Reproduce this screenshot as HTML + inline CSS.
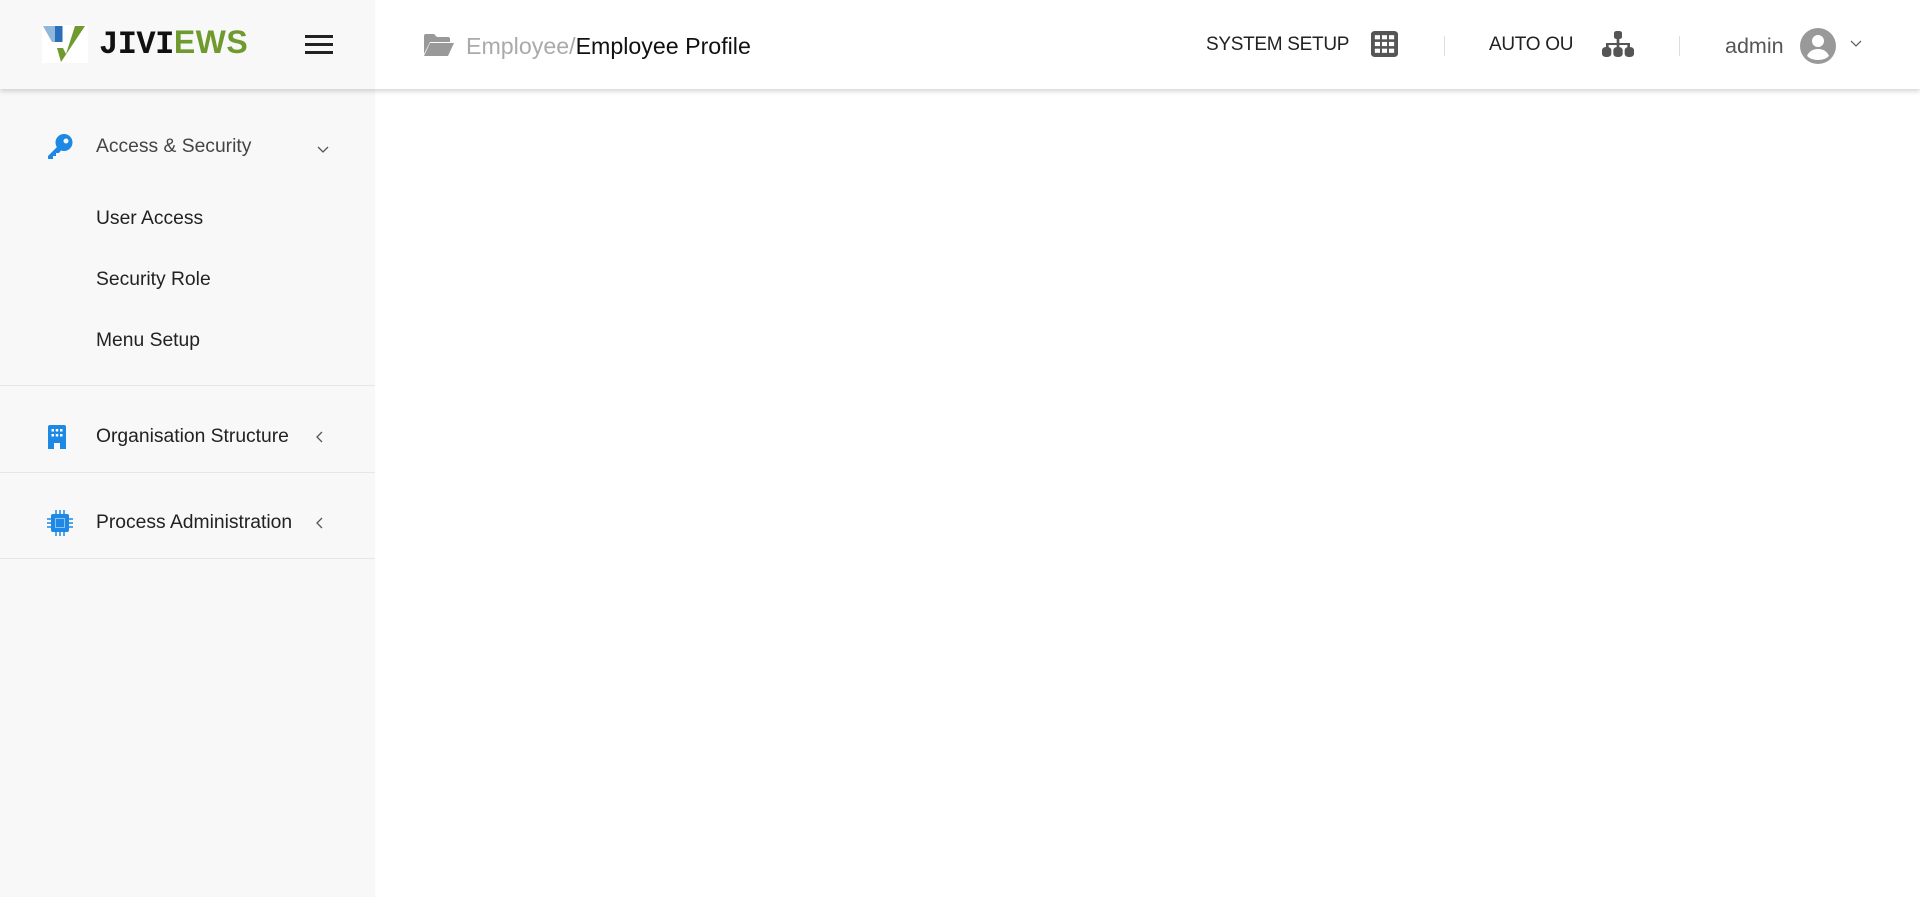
<!DOCTYPE html>
<html><head><meta charset="utf-8"><style>
*{margin:0;padding:0;box-sizing:border-box}
body{width:1920px;height:897px;background:#fff;font-family:"Liberation Sans",sans-serif;position:relative;overflow:hidden}
.side{position:absolute;left:0;top:0;width:375px;height:897px;background:#f8f8f8}
.top{position:absolute;left:0;top:0;width:1920px;height:89px;background:#fff;box-shadow:0 2px 5px rgba(0,0,0,.18)}
.logoarea{position:absolute;left:0;top:0;width:375px;height:89px;background:#f8f8f8}
.t{position:absolute;white-space:nowrap}
.item{position:absolute;left:96px;font-size:19.3px;color:#222;transform:translateY(-50%)}
.sep{position:absolute;left:0;width:375px;height:1px;background:#e6e6e6}
</style></head><body>
<div class="side"></div>
<div class="top"></div>
<div class="logoarea"></div>
<svg style="position:absolute;left:42px;top:25px" width="46" height="38" viewBox="0 0 46 38">
<rect width="46" height="38" fill="#fff"/>
<path d="M1 1h20v16L10 17z" fill="#8fb7dc"/><path d="M13 1h7v16h-7z" fill="#2a6fb8"/>
<path d="M43 1L19 37l-4-14h6l3 6L33 1z" fill="#6e9a2e"/>
</svg>
<div class="t" style="left:99px;top:24px;font:bold 32px 'Liberation Mono',monospace;color:#111;letter-spacing:-0.5px">JIVI<span style="color:#6e9a2e;font-family:'Liberation Sans';letter-spacing:0.5px">EWS</span></div>
<div style="position:absolute;left:305px;top:35px;width:28px;height:3px;background:#222;box-shadow:0 8px 0 #222,0 16px 0 #222"></div>
<svg style="position:absolute;left:423px;top:33px" width="32" height="24" viewBox="0 0 32 24"><path d="M1 3q0-2 2-2h8l3 3h11q2 0 2 2v3H7L1 21z" fill="#999"/><path d="M7 10h24l-6 13H1z" fill="#999"/></svg>
<div class="t" style="left:466px;top:33px;font-size:23.2px;color:#aaa">Employee/<span style="color:#111">Employee Profile</span></div>
<div class="t" style="left:1206px;top:34px;font-size:19px;color:#222;letter-spacing:-0.3px">SYSTEM SETUP</div>
<svg style="position:absolute;left:1371px;top:31px" width="27" height="26" viewBox="0 0 21 25" preserveAspectRatio="none"><rect width="21" height="25" rx="3" fill="#555"/><g fill="#fff"><rect x="3" y="4" width="4" height="4"/><rect x="8.5" y="4" width="4" height="4"/><rect x="14" y="4" width="4" height="4"/><rect x="3" y="10.5" width="4" height="4"/><rect x="8.5" y="10.5" width="4" height="4"/><rect x="14" y="10.5" width="4" height="4"/><rect x="3" y="17" width="4" height="4"/><rect x="8.5" y="17" width="4" height="4"/><rect x="14" y="17" width="4" height="4"/></g></svg>
<div style="position:absolute;left:1444px;top:36px;width:1px;height:20px;background:#ddd"></div>
<div class="t" style="left:1489px;top:34px;font-size:19px;color:#222;letter-spacing:-0.3px">AUTO OU</div>
<svg style="position:absolute;left:1602px;top:31px" width="32" height="26" viewBox="0 0 24 26" preserveAspectRatio="none"><g fill="#555"><rect x="9" y="0" width="6" height="8" rx="2"/><rect x="11" y="7" width="2" height="6"/><rect x="3" y="12" width="18" height="2"/><rect x="3" y="12" width="2" height="5"/><rect x="19" y="12" width="2" height="5"/><rect x="11" y="12" width="2" height="5"/><rect x="0" y="16" width="7" height="10" rx="3"/><rect x="8.5" y="16" width="7" height="10" rx="3"/><rect x="17" y="16" width="7" height="10" rx="3"/></g></svg>
<div style="position:absolute;left:1679px;top:36px;width:1px;height:20px;background:#ddd"></div>
<div class="t" style="left:1725px;top:34px;font-size:21.5px;color:#555">admin</div>
<svg style="position:absolute;left:1800px;top:28px" width="36" height="36" viewBox="0 0 36 36"><circle cx="18" cy="18" r="18" fill="#999"/><circle cx="18" cy="13" r="6" fill="#fff"/><path d="M7 28q3-7 11-7t11 7q-4 4-11 4t-11-4z" fill="#fff"/></svg>
<svg style="position:absolute;left:1850px;top:40px" width="12" height="8" viewBox="0 0 12 8"><path d="M1 1l5 5 5-5" stroke="#666" stroke-width="1.3" fill="none"/></svg>

<svg style="position:absolute;left:47px;top:134px" width="26" height="26" viewBox="0 0 26 26"><circle cx="17" cy="8.5" r="8.5" fill="#1e88e5"/><circle cx="19" cy="7" r="2.5" fill="#f8f8f8"/><path d="M11 12l-10 10v3h5v-3h3v-3h3l3-4z" fill="#1e88e5"/></svg>
<div class="item" style="top:147px;color:#444">Access &amp; Security</div>
<svg style="position:absolute;left:317px;top:146px" width="12" height="8" viewBox="0 0 12 8"><path d="M1 1l5 5 5-5" stroke="#555" stroke-width="1.3" fill="none"/></svg>
<div class="item" style="top:219px">User Access</div>
<div class="item" style="top:280px">Security Role</div>
<div class="item" style="top:341px">Menu Setup</div>
<div class="sep" style="top:385px"></div>
<svg style="position:absolute;left:48px;top:425px" width="18" height="24" viewBox="0 0 18 24"><path d="M2 0h14q2 0 2 2v22h-6v-6H6v6H0V2q0-2 2-2z" fill="#1e88e5"/><g fill="#fff"><rect x="3.5" y="4" width="2.5" height="2.5"/><rect x="7.75" y="4" width="2.5" height="2.5"/><rect x="12" y="4" width="2.5" height="2.5"/><rect x="3.5" y="9" width="2.5" height="2.5"/><rect x="7.75" y="9" width="2.5" height="2.5"/><rect x="12" y="9" width="2.5" height="2.5"/></g></svg>
<div class="item" style="top:437px">Organisation Structure</div>
<svg style="position:absolute;left:316px;top:431px" width="8" height="12" viewBox="0 0 8 12"><path d="M6 1L1 6l5 5" stroke="#555" stroke-width="1.3" fill="none"/></svg>
<div class="sep" style="top:472px"></div>
<svg style="position:absolute;left:47px;top:510px" width="26" height="26" viewBox="0 0 26 26"><rect x="4" y="4" width="18" height="18" rx="2" fill="#1e88e5"/><rect x="8" y="8" width="10" height="10" fill="#8cc4f5"/><rect x="9" y="9" width="8" height="8" fill="#1e88e5"/><g stroke="#1e88e5" stroke-width="1.5"><path d="M9 0v4M13 0v4M17 0v4M9 22v4M13 22v4M17 22v4M0 9h4M0 13h4M0 17h4M22 9h4M22 13h4M22 17h4"/></g></svg>
<div class="item" style="top:523px">Process Administration</div>
<svg style="position:absolute;left:316px;top:517px" width="8" height="12" viewBox="0 0 8 12"><path d="M6 1L1 6l5 5" stroke="#555" stroke-width="1.3" fill="none"/></svg>
<div class="sep" style="top:558px"></div>
</body></html>
